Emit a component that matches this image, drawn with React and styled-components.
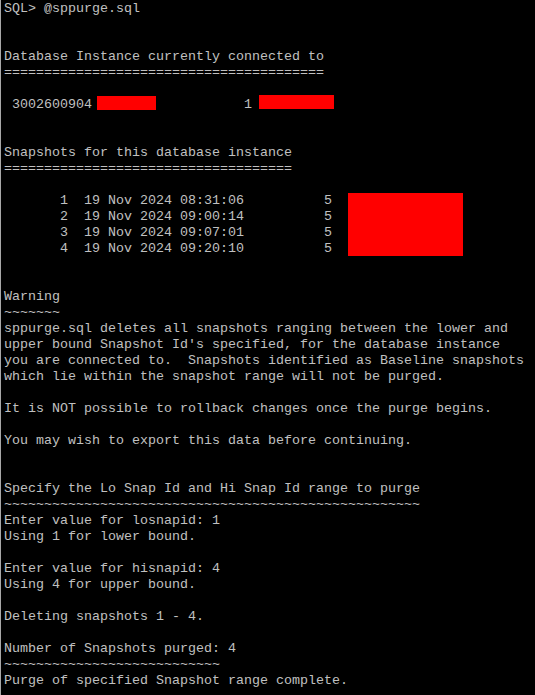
import React from "react";
import styled, { createGlobalStyle } from "styled-components";

const Global = createGlobalStyle`
  html, body { margin: 0; padding: 0; background: #000; }
  body { width: 535px; height: 695px; overflow: hidden; }
`;

const Screen = styled.div`
  box-sizing: border-box;
  width: 535px;
  height: 695px;
  background: #000;
  border-left: 1px solid #a8a8a8;
  padding: 1px 0 0 3px;
  overflow: hidden;
`;

const Output = styled.div`
  display: flex;
  flex-direction: column;
  font-family: "Courier New", "Nimbus Mono PS", "FreeMono", "Liberation Mono", monospace;
  font-size: 13.33px;
  line-height: 16px;
  color: #c0c0c0;
`;

const Line = styled.div`
  position: relative;
  height: 16px;
  white-space: pre;
`;

const Redact = styled.span`
  position: absolute;
  background: #ff0000;
  left: ${(p) => p.$x}px;
  top: ${(p) => p.$y}px;
  width: ${(p) => p.$w}px;
  height: ${(p) => p.$h}px;
`;

const lines = [
  "SQL> @sppurge.sql",
  "",
  "",
  "Database Instance currently connected to",
  "========================================",
  "",
  { text: " 3002600904                   1", redact: [{ x: 93, y: -1, w: 59, h: 14 }, { x: 255, y: -2, w: 75, h: 14 }] },
  "",
  "",
  "Snapshots for this database instance",
  "====================================",
  "",
  { text: "       1  19 Nov 2024 08:31:06          5", redact: [{ x: 344, y: 0, w: 115, h: 63 }] },
  "       2  19 Nov 2024 09:00:14          5",
  "       3  19 Nov 2024 09:07:01          5",
  "       4  19 Nov 2024 09:20:10          5",
  "",
  "",
  "Warning",
  "~~~~~~~",
  "sppurge.sql deletes all snapshots ranging between the lower and",
  "upper bound Snapshot Id's specified, for the database instance",
  "you are connected to.  Snapshots identified as Baseline snapshots",
  "which lie within the snapshot range will not be purged.",
  "",
  "It is NOT possible to rollback changes once the purge begins.",
  "",
  "You may wish to export this data before continuing.",
  "",
  "",
  "Specify the Lo Snap Id and Hi Snap Id range to purge",
  "~~~~~~~~~~~~~~~~~~~~~~~~~~~~~~~~~~~~~~~~~~~~~~~~~~~~",
  "Enter value for losnapid: 1",
  "Using 1 for lower bound.",
  "",
  "Enter value for hisnapid: 4",
  "Using 4 for upper bound.",
  "",
  "Deleting snapshots 1 - 4.",
  "",
  "Number of Snapshots purged: 4",
  "~~~~~~~~~~~~~~~~~~~~~~~~~~~",
  "Purge of specified Snapshot range complete.",
];

export default function App() {
  return (
    <>
      <Global />
      <Screen>
        <Output>
          {lines.map((l, i) => {
            const text = typeof l === "string" ? l : l.text;
            const redact = typeof l === "string" ? [] : l.redact;
            return (
              <Line key={i}>
                {text || " "}
                {redact.map((r, j) => (
                  <Redact key={j} $x={r.x} $y={r.y} $w={r.w} $h={r.h} />
                ))}
              </Line>
            );
          })}
        </Output>
      </Screen>
    </>
  );
}
